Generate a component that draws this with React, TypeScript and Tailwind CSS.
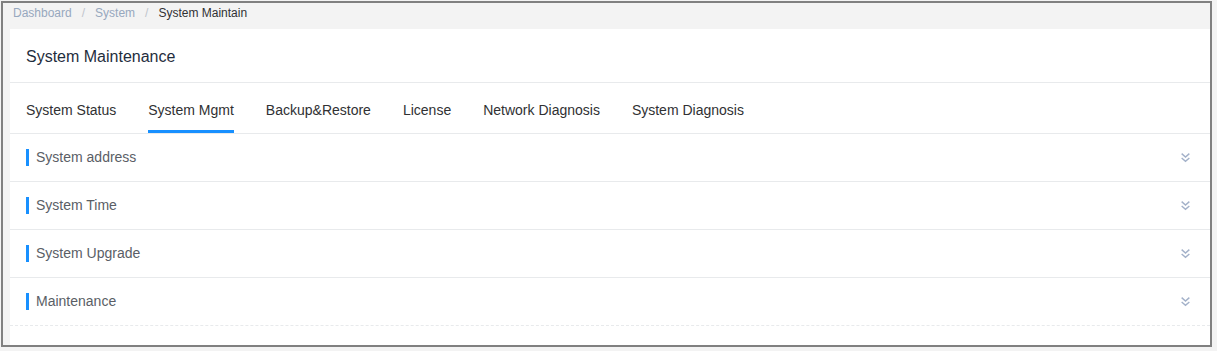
import React from 'react';

const tabs = ['System Status', 'System Mgmt', 'Backup&Restore', 'License', 'Network Diagnosis', 'System Diagnosis'];
const sections = ['System address', 'System Time', 'System Upgrade', 'Maintenance'];

function DoubleChevron() {
  return (
    <svg width="11" height="11" viewBox="0 0 10 10" fill="none" stroke="#a3b1c9" strokeWidth="1.3">
      <polyline points="1.5,1.5 5,4.5 8.5,1.5" />
      <polyline points="1.5,5.5 5,8.5 8.5,5.5" />
    </svg>
  );
}

export default function App() {
  return (
    <div className="min-h-[351px] bg-[#f3f3f3] pt-[1px] pl-[1px]" style={{ fontFamily: '"Liberation Sans", Arial, sans-serif' }}>
      <div className="w-[1211px] h-[346px] border-2 border-[#808080] bg-[#f3f3f3] flex flex-col overflow-hidden">
        {/* breadcrumb */}
        <div className="h-[26px] pl-[10px] pb-[7px] flex items-center text-[12px]">
          <span className="text-[#97a8be]">Dashboard</span>
          <span className="mx-[10px] text-[#c0c4cc]">/</span>
          <span className="text-[#97a8be]">System</span>
          <span className="mx-[10px] text-[#c0c4cc]">/</span>
          <span className="text-[#303133]">System Maintain</span>
        </div>

        <div className="ml-[7px] flex-1 bg-white">
          <div className="h-[54px] px-4 pt-[2px] flex items-center border-b border-[#e8eaec] text-[16px] text-[#1f2d3d]">
            System Maintenance
          </div>

          <div className="h-[51px] px-4 flex gap-8 border-b border-[#e8eaec]">
            {tabs.map((t, i) => (
              <div
                key={t}
                className={
                  'h-full flex items-center text-[14px] text-[#303133] border-b-[3px] ' +
                  (i === 1 ? 'border-[#1890ff]' : 'border-transparent')
                }
              >
                <span className="pt-[7px]">{t}</span>
              </div>
            ))}
          </div>

          {sections.map((s, i) => (
            <div
              key={s}
              className={
                'h-[48px] pl-4 pr-[19px] flex items-center justify-between border-b border-[#e8eaec] ' +
                (i === sections.length - 1 ? 'border-dashed' : '')
              }
            >
              <div className="flex items-center">
                <span className="w-[3px] h-[17px] bg-[#1890ff] mr-[7px]" />
                <span className="text-[14px] text-[#5a5e66]">{s}</span>
              </div>
              <DoubleChevron />
            </div>
          ))}
        </div>
      </div>
    </div>
  );
}
